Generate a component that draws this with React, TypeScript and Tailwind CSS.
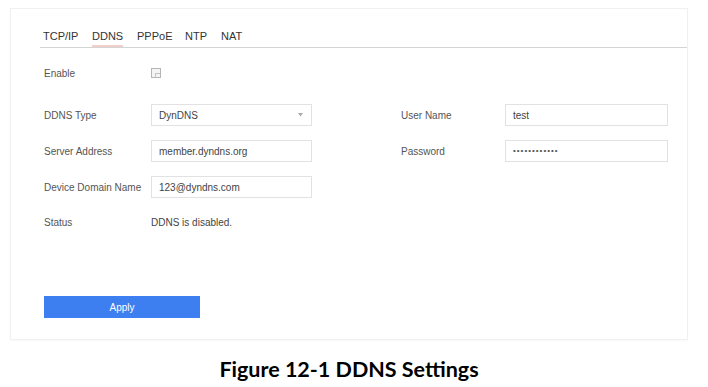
import React from 'react';

const tabs = [
  { label: 'TCP/IP', w: 'w-[52px] pl-[3px]' },
  { label: 'DDNS', w: 'w-[45px]' },
  { label: 'PPPoE', w: 'w-[48px]' },
  { label: 'NTP', w: 'w-[36px]' },
  { label: 'NAT', w: 'w-[30px]' },
];

function Field({ value, select, password }: { value: string; select?: boolean; password?: boolean }) {
  return (
    <div className="h-[22px] w-full border border-[#e2e2e2] bg-white flex items-center justify-between pl-[7px] pr-[8px]">
      {password ? (
        <span className="text-[8px] tracking-[1px] text-[#555] leading-none">••••••••••••</span>
      ) : (
        <span className="text-[10px] text-[#444]">{value}</span>
      )}
      {select && (
        <svg width="5" height="4" viewBox="0 0 5 4">
          <path d="M0 0 L5 0 L2.5 3.5 Z" fill="#aaa" />
        </svg>
      )}
    </div>
  );
}

export default function App() {
  return (
    <div className="w-[708px] h-[387px] bg-white overflow-hidden" style={{ fontFamily: '"Liberation Sans", Arial, sans-serif' }}>
      {/* Settings panel */}
      <div className="ml-[10px] mt-[8px] w-[678px] h-[332px] border border-[#f0f0f0] pl-[29px] shadow-[0_1px_2px_rgba(0,0,0,0.03)]">
        <div className="mt-[19px] flex border-b border-[#d4d4d4] text-[11px] text-[#333]">
          {tabs.map((t) => (
            <div key={t.label} className={`h-[19px] flex items-center ${t.w}`}>
              <span
                className={`h-full flex items-center border-b-2 ${t.label === 'DDNS' ? 'border-[#f2cfca]' : 'border-transparent'}`}
              >
                {t.label}
              </span>
            </div>
          ))}
        </div>

        <div className="pl-[4px] flex flex-col text-[10px] text-[#555]">
          <div className="mt-[14px] h-[22px] flex items-center">
            <div className="w-[107px]">Enable</div>
            <div className="w-[10px] h-[10px] border border-[#b5b5b5] bg-[#f4f4f4] flex items-end justify-end">
              <div className="w-[5px] h-[4px] border-t border-l border-[#c4c4c4]" />
            </div>
          </div>

          <div className="mt-[20px] h-[22px] flex items-center">
            <div className="w-[107px]">DDNS Type</div>
            <div className="w-[161px]"><Field value="DynDNS" select /></div>
            <div className="w-[89px]" />
            <div className="w-[104px]">User Name</div>
            <div className="w-[163px]"><Field value="test" /></div>
          </div>

          <div className="mt-[14px] h-[22px] flex items-center">
            <div className="w-[107px]">Server Address</div>
            <div className="w-[161px]"><Field value="member.dyndns.org" /></div>
            <div className="w-[89px]" />
            <div className="w-[104px]">Password</div>
            <div className="w-[163px]"><Field value="" password /></div>
          </div>

          <div className="mt-[14px] h-[22px] flex items-center">
            <div className="w-[107px] whitespace-nowrap">Device Domain Name</div>
            <div className="w-[161px]"><Field value="123@dyndns.com" /></div>
          </div>

          <div className="mt-[13px] h-[22px] flex items-center">
            <div className="w-[107px]">Status</div>
            <div className="text-[#444]">DDNS is disabled.</div>
          </div>

          <div className="mt-[63px] w-[156px] h-[22px] bg-[#3d7ef0] flex items-center justify-center text-white text-[10px]">
            Apply
          </div>
        </div>
      </div>

      {/* Caption */}
      <div className="mt-[13px] pr-[10px] text-center text-[21.5px] font-bold text-black" style={{ fontFamily: 'Lato, "Open Sans", sans-serif' }}>
        Figure 12-1 DDNS Settings
      </div>
    </div>
  );
}
